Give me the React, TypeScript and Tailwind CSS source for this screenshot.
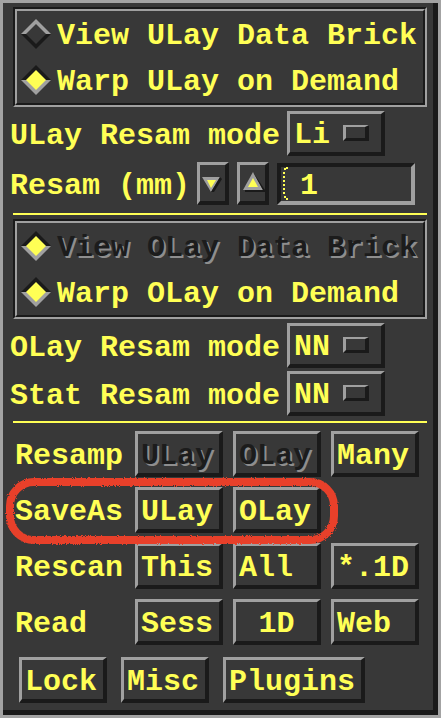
import React from "react";

const font = "font-['Liberation_Mono',monospace] font-bold text-[30px] leading-none";
const yellow = "text-[#ffff55]";
const etched = "text-[#1c1c1c] [text-shadow:2px_2px_0_#8e8e8e]";
const raised =
  "border-t-[3px] border-l-[3px] border-b-4 border-r-4 border-t-[#a0a0a0] border-l-[#a0a0a0] border-b-[#1a1a1a] border-r-[#1a1a1a] bg-[#383838]";

function Diamond({ on }: { on: boolean }) {
  const top = on ? "#1a1a1a" : "#a0a0a0";
  const bottom = on ? "#a0a0a0" : "#1a1a1a";
  return (
    <svg width="30" height="30" viewBox="0 0 30 30" className="shrink-0">
      <polygon points="0,15 15,0 30,15" fill={top} />
      <polygon points="0,15 15,30 30,15" fill={bottom} />
      <polygon points="5,15 15,5 25,15 15,25" fill={on ? "#ffff55" : "#383838"} />
    </svg>
  );
}

function RadioFrame({ items }: { items: { label: string; on: boolean; disabled?: boolean }[] }) {
  return (
    <div className="ml-[10px] w-[414px] border-2 border-t-[#1a1a1a] border-l-[#1a1a1a] border-b-[#a0a0a0] border-r-[#a0a0a0]">
      <div className="border-2 border-t-[#a0a0a0] border-l-[#a0a0a0] border-b-[#1a1a1a] border-r-[#1a1a1a]">
        {items.map((it) => (
          <div key={it.label} className="flex h-[46px] items-center gap-[6px] pl-[4px]">
            <Diamond on={it.on} />
            <span className={`${font} ${it.disabled ? etched : yellow} pt-[4px]`}>{it.label}</span>
          </div>
        ))}
      </div>
    </div>
  );
}

function OptionRow({ label, value, className = "" }: { label: string; value: string; className?: string }) {
  return (
    <div className={`flex h-[45px] items-center pl-[7px] ${className}`}>
      <span className={`${font} ${yellow} w-[277px] pt-[4px]`}>{label}</span>
      <div className={`${raised} flex h-[45px] w-[98px] items-center pl-[4px]`}>
        <span className={`${font} ${yellow} w-[49px] pt-[4px]`}>{value}</span>
        <div className="h-[16px] w-[26px] border-t-2 border-l-[3px] border-b-[3px] border-r-4 border-t-[#a0a0a0] border-l-[#a0a0a0] border-b-[#1a1a1a] border-r-[#1a1a1a]" />
      </div>
    </div>
  );
}

function Btn({ label, w = "w-[88px]", disabled, center }: { label: string; w?: string; disabled?: boolean; center?: boolean }) {
  return (
    <div className={`${raised} ${w} flex h-[46px] items-center ${center ? "justify-center" : "pl-[3px]"}`}>
      <span className={`${font} ${disabled ? etched : yellow} pt-[4px]`}>{label}</span>
    </div>
  );
}

function BtnRow({ label, btns }: { label: string; btns: { label: string; disabled?: boolean; center?: boolean }[] }) {
  return (
    <div className="flex items-center pl-[12px]">
      <span className={`${font} ${yellow} w-[120px] pt-[4px]`}>{label}</span>
      <div className="flex gap-[10px]">
        {btns.map((b, i) => (
          <Btn key={i} label={b.label} disabled={b.disabled} center={b.center} />
        ))}
      </div>
    </div>
  );
}

export default function App() {
  return (
    <div className="relative h-[718px] w-[441px] border-[3px] border-[#a3a3a3]">
      <div className="flex h-full flex-col border-r-[5px] border-b-[5px] border-[#1a1a1a] bg-[#383838] pt-[4px]">
        <RadioFrame
          items={[
            { label: "View ULay Data Brick", on: false },
            { label: "Warp ULay on Demand", on: true },
          ]}
        />
        <OptionRow label="ULay Resam mode" value="Li" className="mt-[4px]" />

        {/* Resam (mm) row */}
        <div className="mt-[6px] flex h-[43px] items-center pl-[7px]">
          <span className={`${font} ${yellow} w-[187px] pt-[4px]`}>Resam (mm)</span>
          <div className={`${raised} h-[43px] w-[32px]`}>
            <svg width="25" height="36" viewBox="0 0 25 36">
              <polygon points="2,12 20,12 11,27" fill="#a0a0a0" />
              <polygon points="20,12 11,27 14,27 22,14" fill="#1a1a1a" />
              <polygon points="7,15 16,15 11,23" fill="#ffff55" />
            </svg>
          </div>
          <div className={`${raised} ml-[8px] h-[43px] w-[32px]`}>
            <svg width="25" height="36" viewBox="0 0 25 36">
              <polygon points="3,25 13,7 23,25" fill="#a0a0a0" />
              <polygon points="13,7 23,25 5,25 5,27 25,27 25,25" fill="#1a1a1a" />
              <polygon points="8,22 13,13 18,22" fill="#ffff55" />
            </svg>
          </div>
          <div className="ml-[8px] flex h-[42px] w-[138px] items-center border-4 border-t-[#1a1a1a] border-l-[#1a1a1a] border-b-[#a0a0a0] border-r-[#a0a0a0]">
            <svg width="8" height="34" viewBox="0 0 8 34" className="ml-[1px] shrink-0">
              <rect x="2" y="1" width="2" height="2" fill="#ffff55" />
              <rect x="4" y="0" width="2" height="2" fill="#ffff55" />
              {[5, 9, 13, 17, 21, 25].map((y) => (
                <rect key={y} x="1" y={y} width="2" height="2" fill="#ffff55" />
              ))}
              <rect x="2" y="29" width="2" height="2" fill="#ffff55" />
              <rect x="4" y="31" width="2" height="2" fill="#ffff55" />
            </svg>
            <span className={`${font} ${yellow} ml-[10px] pt-[4px]`}>1</span>
          </div>
        </div>

        <div className="mt-[8px] ml-[10px] h-[2px] w-[414px] bg-[#ffff55]" />

        <div className="mt-[4px]">
          <RadioFrame
            items={[
              { label: "View OLay Data Brick", on: true, disabled: true },
              { label: "Warp OLay on Demand", on: true },
            ]}
          />
        </div>
        <OptionRow label="OLay Resam mode" value="NN" className="mt-[4px]" />
        <OptionRow label="Stat Resam mode" value="NN" className="mt-[3px]" />

        <div className="mt-[5px] ml-[10px] h-[2px] w-[414px] bg-[#ffff55]" />

        <div className="mt-[8px] flex flex-col gap-[10px]">
          <BtnRow
            label="Resamp"
            btns={[{ label: "ULay", disabled: true }, { label: "OLay", disabled: true }, { label: "Many" }]}
          />
          <div className="flex items-center pl-[12px]">
            <span className={`${font} ${yellow} w-[120px] pt-[4px]`}>SaveAs</span>
            <div className="flex gap-[10px]">
              <Btn label="ULay" />
              <Btn label="OLay" />
            </div>
          </div>
          <BtnRow label="Rescan" btns={[{ label: "This" }, { label: "All" }, { label: "*.1D" }]} />
          <BtnRow label="Read" btns={[{ label: "Sess" }, { label: "1D", center: true }, { label: "Web" }]} />
        </div>

        <div className="mt-[12px] flex gap-[14px] pl-[16px]">
          <Btn label="Lock" />
          <Btn label="Misc" />
          <Btn label="Plugins" w="w-[142px]" />
        </div>
      </div>

      {/* hand-drawn red annotation */}
      <svg className="pointer-events-none absolute left-[-3px] top-[-3px]" width="441" height="718" viewBox="0 0 441 718">
        <defs>
          <filter id="rough" x="-5%" y="-20%" width="110%" height="140%">
            <feTurbulence type="fractalNoise" baseFrequency="0.9" numOctaves="2" seed="3" />
            <feDisplacementMap in="SourceGraphic" scale="3" />
          </filter>
        </defs>
        <rect x="10" y="482" width="324" height="58" rx="24" fill="none" stroke="#e8402b" strokeWidth="8" filter="url(#rough)" />
      </svg>
    </div>
  );
}
